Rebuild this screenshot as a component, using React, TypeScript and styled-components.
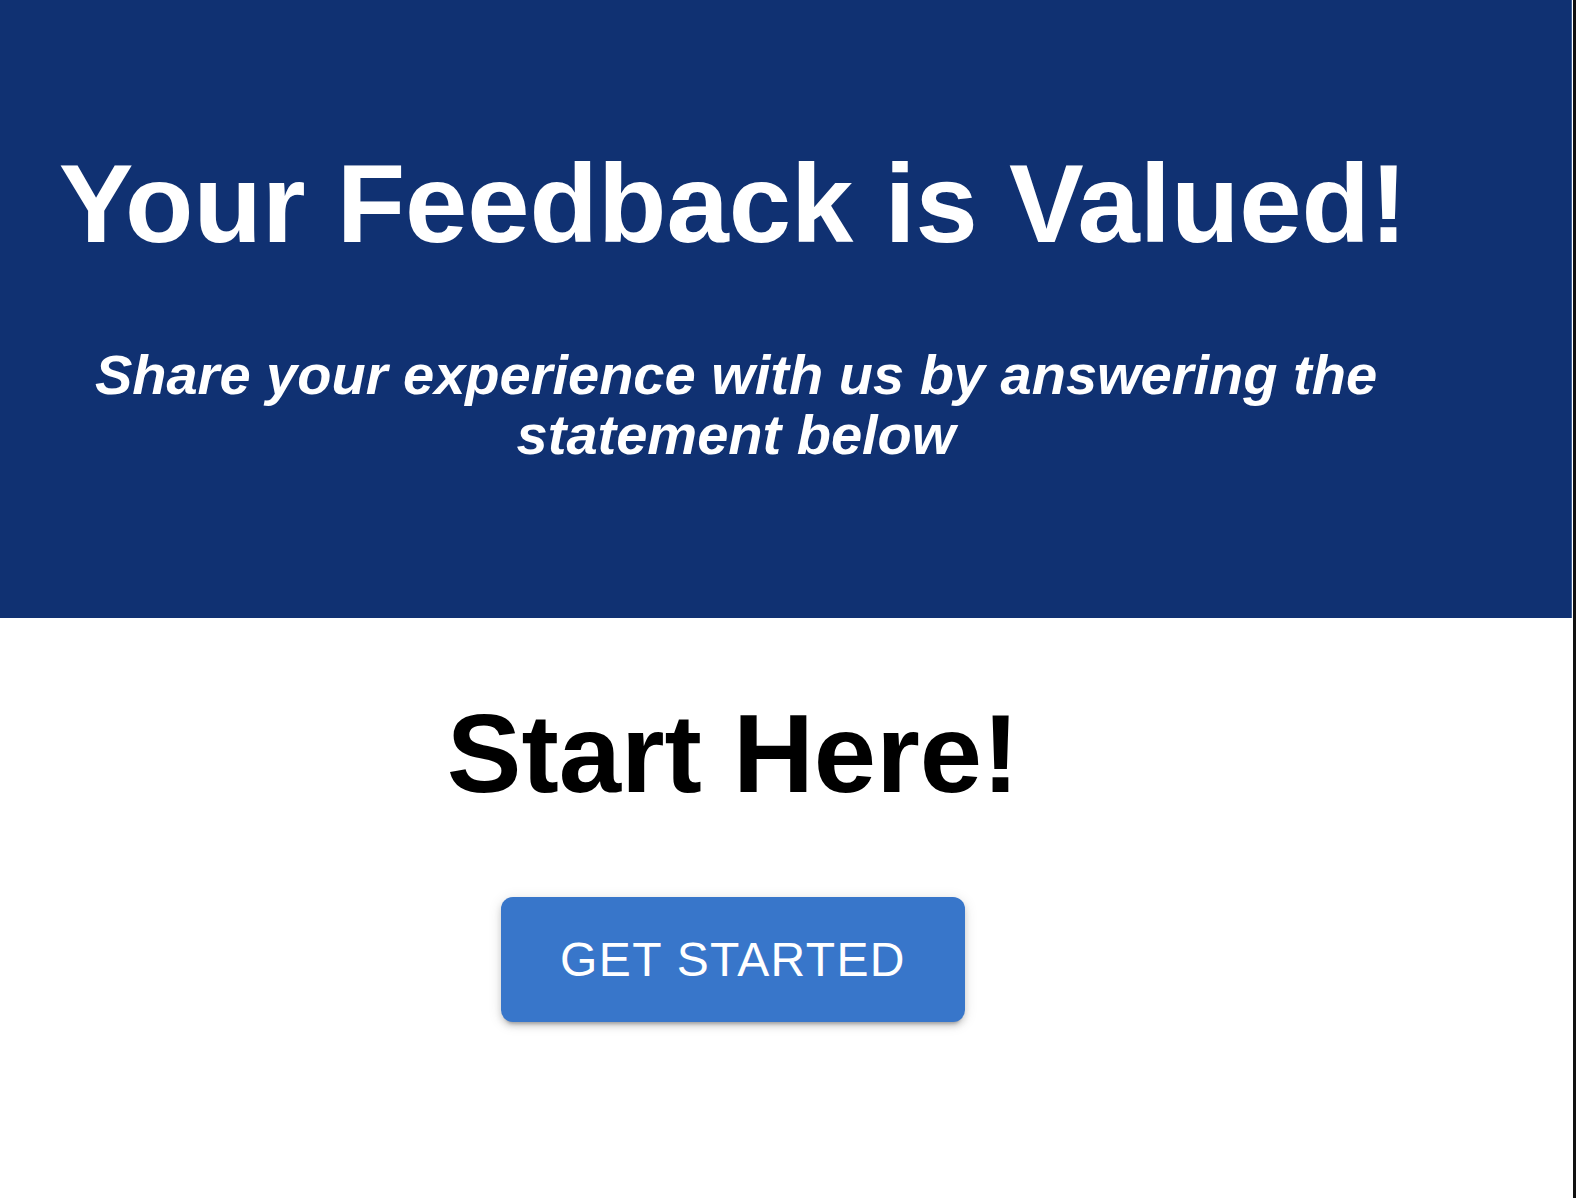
import React from "react";
import styled, { createGlobalStyle } from "styled-components";

const GlobalStyle = createGlobalStyle`
  html, body {
    margin: 0;
    padding: 0;
    background: #111111;
  }
  body {
    font-family: "Liberation Sans", Arial, Helvetica, sans-serif;
  }
  * { box-sizing: border-box; }
`;

const Page = styled.div`
  width: 1573px;
  min-height: 1198px;
  background: #ffffff;
  display: flex;
  flex-direction: column;
`;

const Hero = styled.header`
  width: 1572px;
  background: #103172;
  border-right: 1px solid #3e5f95;
  padding: 148px 0 153px;
`;

const Column = styled.div`
  width: 1466px;
  display: flex;
  flex-direction: column;
  align-items: center;
  text-align: center;
`;

const Title = styled.h1`
  margin: 0;
  color: #ffffff;
  font-size: 112px;
  line-height: 112px;
  font-weight: 700;
  white-space: nowrap;
`;

const Subtitle = styled.p`
  margin: 85px 0 0;
  padding-left: 6px;
  max-width: 1336px;
  color: #ffffff;
  font-size: 56px;
  line-height: 60px;
  font-weight: 700;
  font-style: italic;
`;

const Body = styled(Column)`
  padding-top: 80px;
`;

const Heading = styled.h2`
  margin: 0;
  color: #000000;
  font-size: 112px;
  line-height: 112px;
  font-weight: 700;
`;

const Button = styled.button`
  margin-top: 87px;
  width: 464px;
  height: 125px;
  border: none;
  border-radius: 12px;
  background: #3876ca;
  color: #ffffff;
  font-family: "Liberation Sans", Arial, Helvetica, sans-serif;
  font-size: 48px;
  font-weight: 400;
  letter-spacing: 0.02857em;
  text-transform: uppercase;
  cursor: pointer;
  box-shadow: 0px 6px 3px -4px rgba(0, 0, 0, 0.2),
    0px 4px 6px 0px rgba(0, 0, 0, 0.14),
    0px 2px 14px 0px rgba(0, 0, 0, 0.12);
`;

export default function App() {
  return (
    <>
      <GlobalStyle />
      <Page>
        <Hero>
          <Column>
            <Title>Your Feedback is Valued!</Title>
            <Subtitle>
              Share your experience with us by answering the statement below
            </Subtitle>
          </Column>
        </Hero>
        <Body>
          <Heading>Start Here!</Heading>
          <Button>Get Started</Button>
        </Body>
      </Page>
    </>
  );
}
